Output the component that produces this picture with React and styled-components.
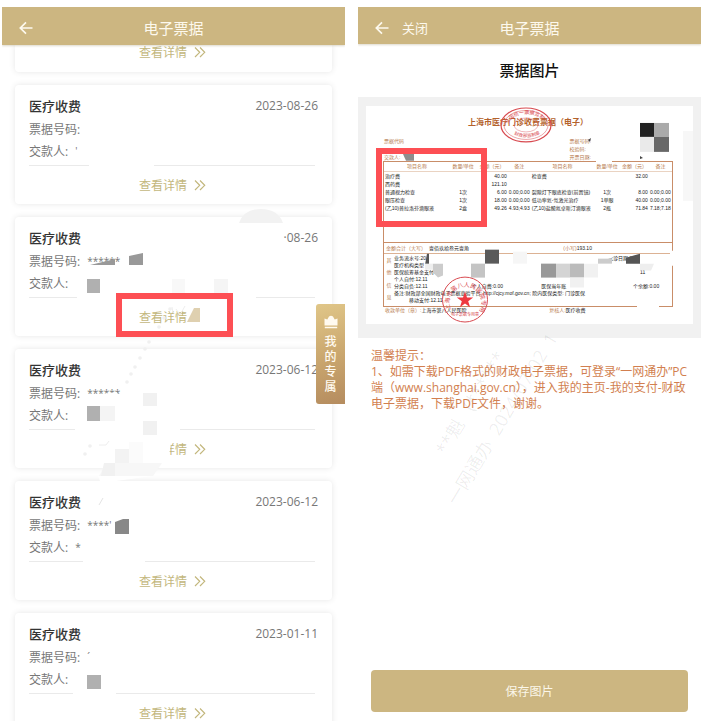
import React from "react";
import styled, { createGlobalStyle } from "styled-components";

const GlobalStyle = createGlobalStyle`
  * { box-sizing: border-box; }
  body {
    margin: 0;
    background: #fff;
    font-family: "Open Sans", "Noto Sans CJK SC", sans-serif;
    font-size: 12px;
    color: #777;
  }
  h1, h2, p, dl, dd, dt, ul { margin: 0; padding: 0; font-weight: 400; }
  button { border: 0; padding: 0; background: none; font: inherit; cursor: pointer; }
`;

const Page = styled.main`
  display: grid;
  grid-template-columns: 1fr 1fr;
  gap: 13px;
  height: 100vh;
  padding: 7px 8px 0 2px;
  overflow: hidden;
`;

const Screen = styled.section`
  position: relative;
  display: flex;
  flex-direction: column;
  min-width: 0;
  min-height: 0;
  overflow: hidden;
`;

/* ---------- header ---------- */

const Header = styled.header`
  position: relative;
  z-index: 1;
  display: grid;
  grid-template-columns: 1fr auto 1fr;
  align-items: center;
  flex: none;
  height: ${(p) => (p.$compact ? 37 : 38)}px;
  padding: 4px 17px 0;
  background: #ccb681;
  color: #fdf9ee;
  box-shadow: 0 1px 2px rgba(120, 100, 50, 0.25);
`;

const HeaderActions = styled.div`
  display: flex;
  align-items: center;
  gap: 13px;
`;

const HeaderButton = styled.button`
  display: flex;
  align-items: center;
  color: inherit;
  font-size: 13px;
  line-height: 18px;
`;

const HeaderTitle = styled.h1`
  font-size: 15px;
  line-height: 20px;
`;

function BackIcon() {
  return (
    <svg width="14" height="14" viewBox="0 0 14 14" fill="none" stroke="currentColor" strokeWidth="1.7">
      <path d="M13.5 7H1.5M7 1.3 1.3 7 7 12.7" />
    </svg>
  );
}

function AppHeader({ closable }) {
  return (
    <Header $compact={closable}>
      <HeaderActions>
        <HeaderButton type="button" aria-label="返回">
          <BackIcon />
        </HeaderButton>
        {closable && <HeaderButton type="button">关闭</HeaderButton>}
      </HeaderActions>
      <HeaderTitle>电子票据</HeaderTitle>
    </Header>
  );
}

/* ---------- bill list ---------- */

const BillList = styled.ul`
  display: flex;
  flex-direction: column;
  gap: 13px;
  padding: 0 13px;
  list-style: none;
`;

const Card = styled.li`
  flex: none;
  padding: ${(p) => (p.$tail ? "0 14px" : "12px 14px 0")};
  border-radius: ${(p) => (p.$tail ? "0 0 4px 4px" : "4px")};
  background: #fff;
  box-shadow: 0 0 6px rgba(0, 0, 0, 0.1);
`;

const CardHead = styled.div`
  display: flex;
  justify-content: space-between;
  margin-bottom: 4px;
  line-height: 18px;
`;

const CardTitle = styled.h2`
  color: #333;
  font-size: 13px;
  font-weight: 500;
`;

const CardDate = styled.time`
  line-height: 18px;
`;

const Field = styled.div`
  display: flex;
  gap: 7px;
  line-height: 22px;
  white-space: nowrap;
`;

const FieldValue = styled.dd`
  font-size: 10px;
  line-height: 20px;
`;

const Divider = styled.div`
  display: flex;
  gap: ${(p) => p.$gap}px;
  height: 1px;
  margin: 2px 3px 0 0;
`;

const Line = styled.span`
  flex: ${(p) => (p.$length ? `0 0 ${p.$length}px` : "1")};
  background: #eaeaea;
`;

const DetailLink = styled.a`
  display: flex;
  align-items: center;
  gap: 7px;
  height: ${(p) => (p.$tail ? 27 : 38)}px;
  padding-left: 110px;
  padding-bottom: ${(p) => (p.$tail ? 13 : 0)}px;
  color: #c3b77d;
  text-decoration: none;
  white-space: nowrap;
`;

function DoubleChevron() {
  return (
    <svg width="12" height="12" viewBox="0 0 12 12" fill="none" stroke="currentColor" strokeWidth="1.2">
      <path d="m1 1.5 4.7 4.8L1 11M6 1.5l4.7 4.8L6 11" />
    </svg>
  );
}

const bills = [
  { date: "2023-08-26", number: "", payer: "'", first: 60, gap: 65 },
  { date: "·08-26", number: "******", payer: "", first: 48, gap: 179, noArrow: true },
  { date: "2023-06-12", number: "******", payer: "", first: 46, gap: 105 },
  { date: "2023-06-12", number: "****'", payer: "*", first: 54, gap: 62 },
  { date: "2023-01-11", number: "´", payer: "", first: 44, gap: 43 },
];

function BillCard({ bill }) {
  return (
    <Card>
      <CardHead>
        <CardTitle>医疗收费</CardTitle>
        <CardDate>{bill.date}</CardDate>
      </CardHead>
      <dl>
        <Field>
          <dt>票据号码:</dt>
          <FieldValue>{bill.number}</FieldValue>
        </Field>
        <Field>
          <dt>交款人:</dt>
          <FieldValue>{bill.payer}</FieldValue>
        </Field>
      </dl>
      <Divider $gap={bill.gap}>
        <Line $length={bill.first} />
        <Line />
      </Divider>
      <DetailLink href="#detail">
        查看详情
        {!bill.noArrow && <DoubleChevron />}
      </DetailLink>
    </Card>
  );
}

const ListMarks = styled.svg`
  position: absolute;
  top: 0;
  left: 0;
  width: 343px;
  height: 714px;
  pointer-events: none;
`;

const dots = [
  [83, 447], [88, 439], [125, 375], [129, 367], [133, 360], [138, 351], [143, 342],
  [147, 335], [157, 320], [162, 311], [168, 302],
];

function BillMarks() {
  return (
    <ListMarks viewBox="0 0 343 714" aria-hidden="true">
      <path d="M237 216q5-14 22-14t22 14z" fill="#f2f2f2" />
      <path d="M88 258 113 252v6z" fill="#999" />
      <path d="M127 249l14-3v12h-14z" fill="#999" />
      <path d="M85 272h13v14H85z" fill="#b0b0b0" />
      <path d="M170 272h13v14h-13z" fill="#f8f8f8" />
      <path d="M212 272h14v14h-14z" fill="#f5f5f5" />
      <path d="M185 315l7-14h6v14z" fill="#dfd0b0" />
      <path d="M84 389l31-4v8H84z" fill="#fff" />
      <path d="M85 399h13v15H85z" fill="#b0b0b0" />
      <path d="M98 399h15v15H98z" fill="#f4f4f4" />
      <path d="M141 386h14v13h-14zM141 414h14v14h-14z" fill="#f1f1f1" />
      <path d="M136 430h34l-4 24h-30z" fill="#fff" />
      <path d="M127 435h14v21h-14z" fill="#fbfbfb" />
      <path d="M113 442h14v14h-14z" fill="#f3f3f3" />
      <path d="M104 456h56l-9 13H97z" fill="#f7f7f7" />
      <path d="M102 456h11v13H99z" fill="#f1f1f1" />
      <path d="M96 469h54l-36 5H98z" fill="#fff" />
      <path d="M97 498l4-7" stroke="#e4e4e4" />
      <path d="M113 515l8-3h6v15h-14z" fill="#888" />
      <path d="M85 668h14v14H85z" fill="#b0b0b0" />
      {dots.map(([x, y]) => (
        <circle key={y} cx={x} cy={y} r="1.8" fill="#f0f0f0" />
      ))}
      <path d="M170 300l1 6M174 302l4 6 5-9M97 438l7 0 3-4" stroke="#eee" fill="none" />
    </ListMarks>
  );
}

const Highlight = styled.div`
  position: absolute;
  top: ${(p) => p.$top}px;
  left: ${(p) => p.$left}px;
  width: ${(p) => p.$width}px;
  height: ${(p) => p.$height}px;
  border: 6px solid #fd4f54;
  pointer-events: none;
`;

const FloatingTab = styled.button`
  position: absolute;
  top: 297px;
  right: 0;
  display: flex;
  flex-direction: column;
  align-items: center;
  width: 29px;
  padding: 11px 8px 10px;
  border-radius: 3px 0 0 3px;
  background: linear-gradient(165deg, #e0c688 0%, #cba86f 50%, #b58c5f 100%);
  color: #fffaf0;
  font-weight: 500;
  line-height: 15px;
`;

const TabText = styled.span`
  width: 12px;
  margin-top: 5px;
`;

function CrownIcon() {
  return (
    <svg width="14" height="14" viewBox="0 0 14 14" fill="currentColor">
      <path d="M.5 3.5 3.300 4.600 5 1.500q2-1.500 4 0l1.700 3.100L13.500 3.500V10.500H.5zM.8 11.700h12.400v1.600H.8z" />
    </svg>
  );
}

/* ---------- receipt screen ---------- */

const SectionTitle = styled.h2`
  padding: 15px 0 16px;
  color: #111;
  font-size: 15px;
  font-weight: 500;
  line-height: 22px;
  text-align: center;
`;

const Viewer = styled.div`
  padding: 9px 8px 14px;
  background: #f1f1f1;
`;

const Receipt = styled.article`
  position: relative;
  padding: 11px 20px 10px 17px;
  background: #fff;
  color: #222;
  font-family: "Liberation Sans", "Noto Sans CJK SC", sans-serif;
  font-size: 5px;
  line-height: 8px;
  white-space: nowrap;
`;

const ReceiptTitle = styled.h2`
  color: #b4622c;
  font-size: 8px;
  font-weight: 700;
  line-height: 12px;
  text-align: center;
`;

const Tinted = styled.span`
  color: #b67a4c;
`;

const MetaGrid = styled.div`
  display: grid;
  grid-template-columns: 64% 1fr;
  padding-top: 8px;
  color: #b67a4c;
`;

const Meta = styled.span`
  height: 8px;
  padding-left: 1px;
`;

const ReceiptFrame = styled.div`
  border: 1px solid #c98d68;
`;

const ItemTable = styled.table`
  width: 100%;
  height: 49px;
  margin-bottom: 30px;
  border-collapse: collapse;
  table-layout: fixed;
`;

const HeadCell = styled.th`
  width: ${(p) => p.$width}%;
  height: 9px;
  padding: 0;
  border-bottom: 1px solid #ead3c2;
  color: #b67a4c;
  font-weight: 400;
  text-align: center;
`;

const Cell = styled.td`
  height: 8px;
  padding: 0 1px;
  text-align: ${(p) => p.$align || "left"};
`;

const TotalRow = styled.div`
  display: grid;
  grid-template-columns: 15% 47% 1fr;
  height: 12px;
  padding-left: 2px;
  border-top: 1px solid #c98d68;
  border-bottom: 1px solid #dcb294;
  line-height: 10px;
`;

const InfoArea = styled.div`
  display: grid;
  grid-template-columns: 10px 1fr;
  padding: 1px 0 2px;
  line-height: 7px;
`;

const InfoSide = styled.div`
  display: flex;
  flex-direction: column;
  justify-content: space-around;
  align-items: center;
  color: #b67a4c;
`;

const InfoRow = styled.div`
  display: grid;
  grid-template-columns: ${(p) => p.$columns || "28% 25% 33% 1fr"};
  height: 7px;
  padding-left: ${(p) => (p.$indent ? 15 : 0)}px;
`;

const SignRow = styled.div`
  display: grid;
  grid-template-columns: 57% 1fr;
  padding-left: 2px;
  line-height: 7px;
`;

const ReceiptMarks = styled.svg`
  position: absolute;
  top: 0;
  left: 0;
  width: 100%;
  height: 100%;
`;

const widths = [23, 9, 11, 8, 22, 9, 10, 8];
const heads = ["项目名称", "数量/单位", "金额（元）", "备注", "项目名称", "数量/单位", "金额（元）", "备注"];
const aligns = ["left", "center", "right", "left", "left", "center", "right", "left"];
const items = [
  ["治疗费", "", "40.00", "", "检查费", "", "32.00", ""],
  ["西药费", "", "121.10", "", "", "", "", ""],
  ["普通视力检查", "1次", "6.00", "0.00;0.00", "裂隙灯下眼底检查(前置镜)", "1次", "8.00", "0.00;0.00"],
  ["眼压检查", "1次", "18.00", "0.00;0.00", "低功率氦-氖激光治疗", "1单眼", "40.00", "0.00;0.00"],
  ["(乙10)普拉洛芬滴眼液", "2盒", "49.26", "4.93;4.93", "(乙10)盐酸氮卓斯汀滴眼液", "2瓶", "71.84", "7.18;7.18"],
];

function Seals() {
  return (
    <ReceiptMarks viewBox="0 0 327 218" preserveAspectRatio="none" aria-hidden="true">
      <defs>
        <path id="arcTop" d="M142 18a19 13 0 0 1 37 0" />
        <path id="arcBottom" d="M145 26a17 9 0 0 0 31 0" />
        <path id="arcRound" d="M85 204a16 16 0 1 1 29 0" />
      </defs>

      <g fill="#fff">
        <path d="M230 53h16v4h-16zM304 145h6v15h-6z" />
        <path d="M66 149h183l-3 3-20 6H66zM192 163h60v7h-60zM252 161h22v11h-22z" />
        <path d="M271 198h22v4h-22zM18 43h28v5H18z" />
      </g>
      <path d="M317 25h10v70h-10z" fill="#f7f7f7" />

      <g>
        <path d="M274 17h14v14h-14z" fill="#222" />
        <path d="M288 17h15v14h-15z" fill="#aaa" />
        <path d="M274 31h14v15h-14z" fill="#eaeaea" />
        <path d="M288 31h15v15h-15z" fill="#686868" />
        <path d="M37 48h11v7h-8z" fill="#8d8d8d" />
        <path d="M222 34l3-2-1 4M274 50l3 2-3 1M222 51h1v1" fill="#444" />
        <path d="M59 159l2-11h2v11z" fill="#555" />
        <path d="M59 158h8v6h-8z" fill="#eee" />
        <path d="M67 158h10v12l-5 2-5-5z" fill="#ccc" />
        <path d="M105 158h14v14h-14z" fill="#c4c4c4" />
        <path d="M119 144h14v14h-14z" fill="#5a5a5a" />
        <path d="M147 146h14v12h-14z" fill="#f6f6f6" />
        <path d="M175 158h15v14h-15z" fill="#999" />
        <path d="M190 158h14v14h-14z" fill="#d4d4d4" />
        <path d="M204 158h14v14h-14z" fill="#bbb" />
        <path d="M218 158h14v14h-14zM204 172h14v10h-14z" fill="#f1f1f1" />
        <path d="M232 153h14v5h-14z" fill="#ccc" />
        <path d="M260 152l14-4v10h-14z" fill="#555" />
        <path d="M274 158h14l-3 7h-11z" fill="#eee" />
      </g>

      <g fill="none" stroke="#d84a50">
        <ellipse cx="160" cy="19" rx="25" ry="17" strokeWidth="1.2" />
        <ellipse cx="160" cy="19" rx="22" ry="14.500" strokeWidth=".5" />
        <ellipse cx="160" cy="19" rx="12" ry="7" strokeWidth=".4" />
        <circle cx="99" cy="194" r="22.500" strokeWidth="1" />
      </g>
      <g fill="#d84a50" fontFamily="Noto Sans CJK SC, sans-serif">
        <text fontSize="5"><textPath href="#arcTop">全国统一票据监制</textPath></text>
        <text fontSize="4.500"><textPath href="#arcBottom" startOffset="4">财政部监制章</textPath></text>
        <text fontSize="6"><textPath href="#arcRound">上海市第八人民医院专用</textPath></text>
        <text x="99" y="210" fontSize="4" textAnchor="middle">电子票据专用章</text>
        <path fill="#ee3940" d="M99 186l2 6h6.200l-5 3.700 1.900 6-5.100-3.700-5.100 3.700 1.900-6-5-3.700h6.200z" />
      </g>
    </ReceiptMarks>
  );
}

function ReceiptImage() {
  return (
    <Receipt>
      <ReceiptTitle>上海市医疗门诊收费票据（电子）</ReceiptTitle>
      <MetaGrid>
        <Meta>票据代码</Meta>
        <Meta>票据号码:</Meta>
        <Meta />
        <Meta>校验码:</Meta>
        <Meta>交款人:</Meta>
        <Meta>开票日期:</Meta>
      </MetaGrid>
      <ReceiptFrame>
        <ItemTable>
          <thead>
            <tr>
              {heads.map((head, i) => (
                <HeadCell key={i} $width={widths[i]}>{head}</HeadCell>
              ))}
            </tr>
          </thead>
          <tbody>
            {items.map((row, r) => (
              <tr key={r}>
                {row.map((value, i) => (
                  <Cell key={i} $align={aligns[i]}>{value}</Cell>
                ))}
              </tr>
            ))}
          </tbody>
        </ItemTable>
        <TotalRow>
          <Tinted>金额合计（大写）</Tinted>
          <span>壹佰玖拾叁元壹角</span>
          <span><Tinted>(小写)</Tinted>193.10</span>
        </TotalRow>
        <InfoArea>
          <InfoSide>
            <span>其</span>
            <span>他</span>
            <span>信</span>
            <span>息</span>
          </InfoSide>
          <div>
            <InfoRow $columns="77% 1fr"><span>业务流水号:20</span><span>就诊日期:20</span></InfoRow>
            <InfoRow><span>医疗机构类型</span></InfoRow>
            <InfoRow><span>医保统筹基金支付:0.0</span><span /><span /><span>12.11</span></InfoRow>
            <InfoRow><span>个人自付:12.11</span></InfoRow>
            <InfoRow><span>分类自负:12.11</span><span>个人自费:0.00</span><span>医保当年账</span><span>个余额:0.00</span></InfoRow>
            <InfoRow $columns="1fr"><span>备注:财政部全国财政电子票据查验平台: http://cjcy.mof.gov.cn; 院内医保类型: 门诊医保</span></InfoRow>
            <InfoRow $columns="1fr" $indent><span>移动支付:12.11</span></InfoRow>
          </div>
        </InfoArea>
      </ReceiptFrame>
      <SignRow>
        <span><Tinted>收款单位（章）:</Tinted>上海市第八人民医院</span>
        <span><Tinted>复核人:</Tinted>医疗收费</span>
      </SignRow>
      <Seals />
    </Receipt>
  );
}

const Tips = styled.p`
  padding: 10px 9px 0 13px;
  color: #d27f50;
  line-height: 16px;
  white-space: nowrap;
`;

const SaveButton = styled.button`
  height: 42px;
  margin: auto 13px 9px;
  flex: none;
  border-radius: 4px;
  background: #ccb681;
  color: #fbf7ea;
`;

const Watermark = styled.span`
  position: absolute;
  top: ${(p) => p.$top}px;
  left: ${(p) => p.$left}px;
  color: rgba(0, 0, 0, 0.07);
  font-size: 18px;
  line-height: 20px;
  white-space: pre;
  transform: rotate(-59deg);
  transform-origin: 0 50%;
  pointer-events: none;
`;

export default function App() {
  return (
    <Page>
      <GlobalStyle />
      <Screen>
        <AppHeader />
        <BillList>
          <Card $tail>
            <DetailLink href="#detail" $tail>
              查看详情
              <DoubleChevron />
            </DetailLink>
          </Card>
          {bills.map((bill, i) => (
            <BillCard key={i} bill={bill} />
          ))}
        </BillList>
        <BillMarks />
        <Highlight $top={286} $left={114} $width={117} $height={44} />
        <FloatingTab type="button">
          <CrownIcon />
          <TabText>我的专属</TabText>
        </FloatingTab>
      </Screen>

      <Screen>
        <AppHeader closable />
        <SectionTitle>票据图片</SectionTitle>
        <Viewer>
          <ReceiptImage />
        </Viewer>
        <Tips>
          温馨提示：
          <br />
          1、如需下载PDF格式的财政电子票据，可登录“一网通办”PC
          <br />
          端（www.shanghai.gov.cn），进入我的主页-我的支付-财政
          <br />
          电子票据，下载PDF文件，谢谢。
        </Tips>
        <Highlight $top={141} $left={18} $width={111} $height={79} />
        <Watermark $top={486} $left={93}>一网通办  2024/07/02  1</Watermark>
        <Watermark $top={436} $left={82}>**魁   (******</Watermark>
        <SaveButton type="button">保存图片</SaveButton>
      </Screen>
    </Page>
  );
}
